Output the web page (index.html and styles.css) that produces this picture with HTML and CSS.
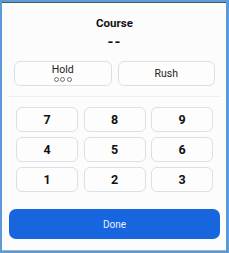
FILE: index.html
```html
<!DOCTYPE html>
<html>
<head>
<meta charset="utf-8">
<link rel="stylesheet" href="styles.css">
</head>
<body>
<div class="frame">
  <div class="title">Course</div>
  <div class="value">--</div>
  <div class="options">
    <button class="opt hold"><span class="opt-label">Hold</span><span class="dots"><i></i><i></i><i></i></span></button>
    <button class="opt"><span class="opt-label">Rush</span></button>
  </div>
  <div class="sep"></div>
  <div class="pad">
    <button class="key">7</button>
    <button class="key">8</button>
    <button class="key">9</button>
    <button class="key">4</button>
    <button class="key">5</button>
    <button class="key">6</button>
    <button class="key">1</button>
    <button class="key">2</button>
    <button class="key">3</button>
  </div>
  <button class="done">Done</button>
</div>
</body>
</html>
```
FILE: styles.css
```css
html, body {
  margin: 0;
  padding: 0;
  background: #ffffff;
}
.frame {
  width: 229px;
  height: 253px;
  box-sizing: border-box;
  border: 2px solid #5b9bd8;
  border-right-width: 3px;
  border-bottom-width: 2px;
  background: #fcfcfc;
  box-shadow: inset 0 1px 0 #4d5560, inset 0 -1px 0 #a9aeb5;
  display: flex;
  flex-direction: column;
  font-family: Roboto, "Liberation Sans", sans-serif;
  color: #111;
  padding: 0 6px 0 7px;
}
.title {
  margin-top: 14px;
  height: 14px;
  line-height: 14px;
  font-size: 11.5px;
  font-weight: 700;
  text-align: center;
}
.value {
  margin-top: 4px;
  height: 16px;
  line-height: 16px;
  font-size: 15px;
  font-weight: 700;
  text-align: center;
  letter-spacing: 1px;
}
.options {
  margin: 11px 5px 0 5px;
  display: grid;
  grid-template-columns: 1fr 1fr;
  gap: 6px;
}
.opt {
  height: 25px;
  box-sizing: border-box;
  border: 1px solid #d9e0e7;
  border-radius: 6px;
  background: #fdfdfd;
  font-family: inherit;
  font-size: 10.5px;
  color: #222;
  padding: 0;
  display: flex;
  flex-direction: column;
  align-items: center;
  justify-content: center;
}
.opt-label {
  line-height: 12px;
}
.hold .opt-label {
  margin-top: -1px;
}
.dots {
  display: flex;
  gap: 1.5px;
  margin-top: 1px;
}
.dots i {
  display: block;
  width: 3px;
  height: 3px;
  border: 1px solid #707070;
  border-radius: 50%;
}
.sep {
  margin-top: 10px;
  height: 1px;
  background: #eceef0;
}
.pad {
  margin: 10px 7px 0 7px;
  display: grid;
  grid-template-columns: repeat(3, 1fr);
  grid-auto-rows: 25px;
  column-gap: 5.5px;
  row-gap: 5px;
}
.key {
  box-sizing: border-box;
  border: 1px solid #d9e0e7;
  border-radius: 6px;
  background: #fdfdfd;
  font-family: inherit;
  font-size: 12.5px;
  font-weight: 700;
  color: #111;
  padding: 0;
}
.done {
  margin-top: 17px;
  height: 30px;
  border: none;
  border-radius: 7px;
  background: #1766e0;
  color: #e8effc;
  font-family: inherit;
  font-size: 10px;
  padding: 0;
}
```
